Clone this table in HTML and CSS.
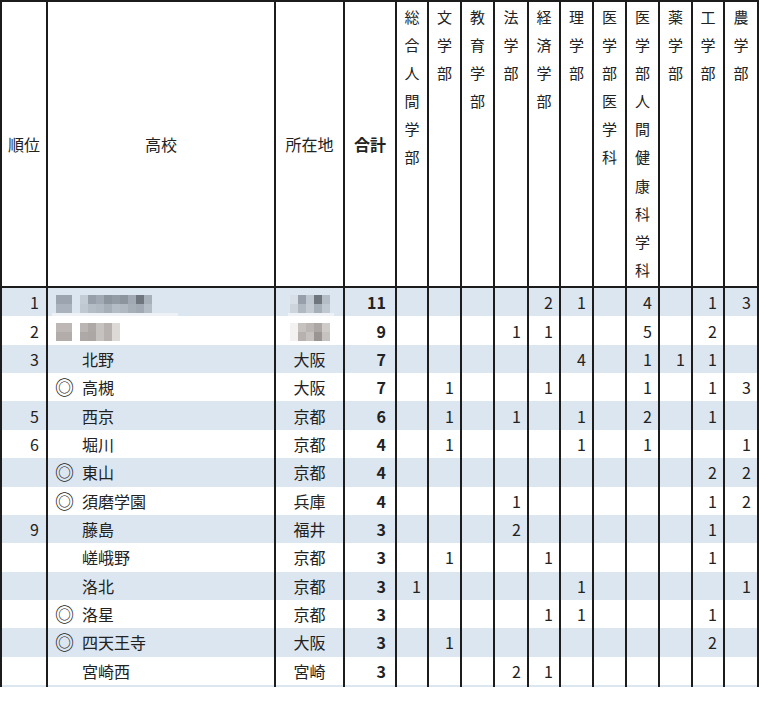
FILE: index.html
```html
<!DOCTYPE html>
<html lang="ja">
<head>
<meta charset="utf-8">
<title>合格者数</title>
<link rel="stylesheet" href="styles.css">
</head>
<body>
<div class="sheet">
<table class="grid">
  <colgroup>
    <col class="w-rank"><col class="w-school"><col class="w-loc"><col class="w-total">
    <col class="w-32"><col class="w-33"><col class="w-33"><col class="w-34"><col class="w-32"><col class="w-33"><col class="w-33"><col class="w-33"><col class="w-33"><col class="w-32"><col class="w-last">
  </colgroup>
  <thead>
    <tr>
      <th class="h-mid"><span class="htxt">順位</span></th>
      <th class="h-mid"><span class="htxt">高校</span></th>
      <th class="h-mid"><span class="htxt">所在地</span></th>
      <th class="h-mid bold"><span class="htxt">合計</span></th>
      <th class="h-vert"><div class="vt">総合人間学部</div></th>
      <th class="h-vert"><div class="vt">文学部</div></th>
      <th class="h-vert"><div class="vt">教育学部</div></th>
      <th class="h-vert"><div class="vt">法学部</div></th>
      <th class="h-vert"><div class="vt">経済学部</div></th>
      <th class="h-vert"><div class="vt">理学部</div></th>
      <th class="h-vert"><div class="vt">医学部医学科</div></th>
      <th class="h-vert"><div class="vt">医学部人間健康科学科</div></th>
      <th class="h-vert"><div class="vt">薬学部</div></th>
      <th class="h-vert"><div class="vt">工学部</div></th>
      <th class="h-vert"><div class="vt">農学部</div></th>
    </tr>
  </thead>
  <tbody>
    <tr class="band">
      <td class="rank">1</td>
      <td class="school">
        <span class="mosaic m-blue">
          <span class="mg"><i class="b1"></i><i class="b1"></i><i class="b2"></i><i class="b2"></i></span>
          <span class="mg mg9"><i class="b3"></i><i class="b4"></i><i class="b5"></i><i class="b6"></i><i class="b7"></i><i class="b6"></i><i class="b5"></i><i class="b8"></i><i class="b9"></i><i class="b10"></i><i class="b11"></i><i class="b12"></i><i class="b13"></i><i class="b11"></i><i class="b12"></i><i class="b13"></i><i class="b5"></i><i class="b11"></i></span>
        </span>
      </td>
      <td class="loc">
        <span class="mosaic m-blue m-loc">
          <span class="mg mg5"><i class="b14"></i><i class="b4"></i><i class="b10"></i><i class="b8"></i><i class="b11"></i><i class="b15"></i><i class="b12"></i><i class="b16"></i><i class="b13"></i><i class="b10"></i></span>
        </span>
      </td>
      <td class="total">11</td>
      <td></td><td></td><td></td><td></td><td class="n">2</td><td class="n">1</td><td></td><td class="n">4</td><td></td><td class="n">1</td><td class="n">3</td>
    </tr>
    <tr>
      <td class="rank">2</td>
      <td class="school">
        <span class="mosaic m-warm">
          <span class="mg"><i class="w1"></i><i class="w1"></i><i class="w2"></i><i class="w2"></i></span>
          <span class="mg mg5"><i class="w3"></i><i class="w4"></i><i class="w5"></i><i class="w6"></i><i class="w7"></i><i class="w4"></i><i class="w8"></i><i class="w5"></i><i class="w6"></i><i class="w7"></i></span>
        </span>
      </td>
      <td class="loc">
        <span class="mosaic m-warm m-loc">
          <span class="mg mg5"><i class="w9"></i><i class="w5"></i><i class="w3"></i><i class="w8"></i><i class="w10"></i><i class="w9"></i><i class="w6"></i><i class="w5"></i><i class="w11"></i><i class="w5"></i></span>
        </span>
      </td>
      <td class="total">9</td>
      <td></td><td></td><td></td><td class="n">1</td><td class="n">1</td><td></td><td></td><td class="n">5</td><td></td><td class="n">2</td><td></td>
    </tr>
    <tr class="band">
      <td class="rank">3</td><td class="school"><span class="mark"></span>北野</td><td class="loc">大阪</td><td class="total">7</td>
      <td></td><td></td><td></td><td></td><td></td><td class="n">4</td><td></td><td class="n">1</td><td class="n">1</td><td class="n">1</td><td></td>
    </tr>
    <tr>
      <td class="rank"></td><td class="school"><span class="mark">◎</span>高槻</td><td class="loc">大阪</td><td class="total">7</td>
      <td></td><td class="n">1</td><td></td><td></td><td class="n">1</td><td></td><td></td><td class="n">1</td><td></td><td class="n">1</td><td class="n">3</td>
    </tr>
    <tr class="band">
      <td class="rank">5</td><td class="school"><span class="mark"></span>西京</td><td class="loc">京都</td><td class="total">6</td>
      <td></td><td class="n">1</td><td></td><td class="n">1</td><td></td><td class="n">1</td><td></td><td class="n">2</td><td></td><td class="n">1</td><td></td>
    </tr>
    <tr>
      <td class="rank">6</td><td class="school"><span class="mark"></span>堀川</td><td class="loc">京都</td><td class="total">4</td>
      <td></td><td class="n">1</td><td></td><td></td><td></td><td class="n">1</td><td></td><td class="n">1</td><td></td><td></td><td class="n">1</td>
    </tr>
    <tr class="band">
      <td class="rank"></td><td class="school"><span class="mark">◎</span>東山</td><td class="loc">京都</td><td class="total">4</td>
      <td></td><td></td><td></td><td></td><td></td><td></td><td></td><td></td><td></td><td class="n">2</td><td class="n">2</td>
    </tr>
    <tr>
      <td class="rank"></td><td class="school"><span class="mark">◎</span>須磨学園</td><td class="loc">兵庫</td><td class="total">4</td>
      <td></td><td></td><td></td><td class="n">1</td><td></td><td></td><td></td><td></td><td></td><td class="n">1</td><td class="n">2</td>
    </tr>
    <tr class="band">
      <td class="rank">9</td><td class="school"><span class="mark"></span>藤島</td><td class="loc">福井</td><td class="total">3</td>
      <td></td><td></td><td></td><td class="n">2</td><td></td><td></td><td></td><td></td><td></td><td class="n">1</td><td></td>
    </tr>
    <tr>
      <td class="rank"></td><td class="school"><span class="mark"></span>嵯峨野</td><td class="loc">京都</td><td class="total">3</td>
      <td></td><td class="n">1</td><td></td><td></td><td class="n">1</td><td></td><td></td><td></td><td></td><td class="n">1</td><td></td>
    </tr>
    <tr class="band">
      <td class="rank"></td><td class="school"><span class="mark"></span>洛北</td><td class="loc">京都</td><td class="total">3</td>
      <td class="n">1</td><td></td><td></td><td></td><td></td><td class="n">1</td><td></td><td></td><td></td><td></td><td class="n">1</td>
    </tr>
    <tr>
      <td class="rank"></td><td class="school"><span class="mark">◎</span>洛星</td><td class="loc">京都</td><td class="total">3</td>
      <td></td><td></td><td></td><td></td><td class="n">1</td><td class="n">1</td><td></td><td></td><td></td><td class="n">1</td><td></td>
    </tr>
    <tr class="band">
      <td class="rank"></td><td class="school"><span class="mark">◎</span>四天王寺</td><td class="loc">大阪</td><td class="total">3</td>
      <td></td><td class="n">1</td><td></td><td></td><td></td><td></td><td></td><td></td><td></td><td class="n">2</td><td></td>
    </tr>
    <tr>
      <td class="rank"></td><td class="school"><span class="mark"></span>宮崎西</td><td class="loc">宮崎</td><td class="total">3</td>
      <td></td><td></td><td></td><td class="n">2</td><td class="n">1</td><td></td><td></td><td></td><td></td><td></td><td></td>
    </tr>
    <tr class="band">
      <td class="rank"></td><td class="school"></td><td class="loc"></td><td class="total"></td>
      <td></td><td></td><td></td><td></td><td></td><td></td><td></td><td></td><td></td><td></td><td></td>
    </tr>
  </tbody>
</table>
</div>
</body>
</html>
```

FILE: styles.css
```css
html, body {
  margin: 0;
  padding: 0;
  background: #ffffff;
}

.sheet {
  width: 760px;
  height: 687px;
  overflow: hidden;
}

.grid {
  border-collapse: separate;
  border-spacing: 0;
  table-layout: fixed;
  width: 759px;
  font-family: "Noto Sans CJK JP", "Noto Sans", sans-serif;
  font-size: 16px;
  color: #222222;
}

.w-rank { width: 46px; }
.w-school { width: 228px; }
.w-loc { width: 69px; }
.w-total { width: 52px; }
.w-32 { width: 32px; }
.w-33 { width: 33px; }
.w-34 { width: 34px; }
.w-last { width: 36px; }

.grid th,
.grid td {
  border-left: 2px solid #1c1c1c;
  padding: 0;
  box-sizing: border-box;
  white-space: nowrap;
  overflow: hidden;
  color: #222222;
}

.grid th:last-child,
.grid td:last-child {
  border-right: 2px solid #1c1c1c;
}

.grid thead tr {
  height: 288px;
}

.grid thead th {
  border-top: 2px solid #1c1c1c;
  border-bottom: 2px solid #1c1c1c;
  font-weight: normal;
  background: #ffffff;
}

.h-mid {
  vertical-align: middle;
  text-align: center;
  font-size: 16px;
}

.htxt {
  color: #222222;
}

.bold {
  font-weight: bold !important;
}

.h-vert {
  vertical-align: top;
  text-align: center;
  white-space: normal !important;
}

.vt {
  width: 1em;
  margin: 0 auto;
  padding-top: 1px;
  font-size: 15px;
  line-height: 28.1px;
  word-break: break-all;
  white-space: normal;
}

.grid tbody tr {
  height: 28.36px;
}

.grid tbody td {
  vertical-align: middle;
  line-height: 20px;
}

.band td {
  background: #dce6f1;
}

.rank {
  text-align: right;
  padding-right: 7px !important;
}

.school {
  text-align: left;
  padding-left: 7px !important;
}

.mark {
  display: inline-block;
  width: 27px;
  font-size: 19px;
  line-height: 20px;
  vertical-align: top;
}

.loc {
  text-align: center;
}

.total {
  text-align: right;
  font-weight: bold;
  padding-right: 9px !important;
}

.n {
  text-align: right;
  padding-right: 6px !important;
}

/* redaction mosaic */
.mosaic {
  position: relative;
  display: inline-flex;
  gap: 8px;
  vertical-align: middle;
}

.school .mosaic {
  margin-left: 1px;
}

.mg {
  display: grid;
  grid-template-columns: repeat(2, 8px);
  grid-auto-rows: 9px;
}

.mg5 { grid-template-columns: repeat(5, 8px); }
.mg9 { grid-template-columns: repeat(9, 8px); }

.mg i { display: block; }

.m-blue::after {
  content: "";
  position: absolute;
  left: -4px;
  right: -26px;
  bottom: -7px;
  height: 7px;
  background: #eef2f7;
}

.m-loc.m-blue::after {
  left: -2px;
  right: -4px;
}

.b1 { background: #9ca5af; }
.b2 { background: #aab3bd; }
.b3 { background: #c3cbd4; }
.b4 { background: #97a0aa; }
.b5 { background: #a1aab4; }
.b6 { background: #8c959e; }
.b7 { background: #939ca5; }
.b8 { background: #6f767d; }
.b9 { background: #a7b0b9; }
.b10 { background: #bfc8d1; }
.b11 { background: #b4bdc6; }
.b12 { background: #b0b9c2; }
.b13 { background: #a6afb8; }
.b14 { background: #d9dfe6; }
.b15 { background: #cdd4dc; }
.b16 { background: #c4cbd3; }

.w1 { background: #bdb8b5; }
.w2 { background: #b2adaa; }
.w3 { background: #bbb6b3; }
.w4 { background: #aea9a6; }
.w5 { background: #c6c2bf; }
.w6 { background: #b7b2af; }
.w7 { background: #dcd9d7; }
.w8 { background: #aca7a4; }
.w9 { background: #f3f2f1; }
.w10 { background: #cfcbc8; }
.w11 { background: #9a9592; }
```
